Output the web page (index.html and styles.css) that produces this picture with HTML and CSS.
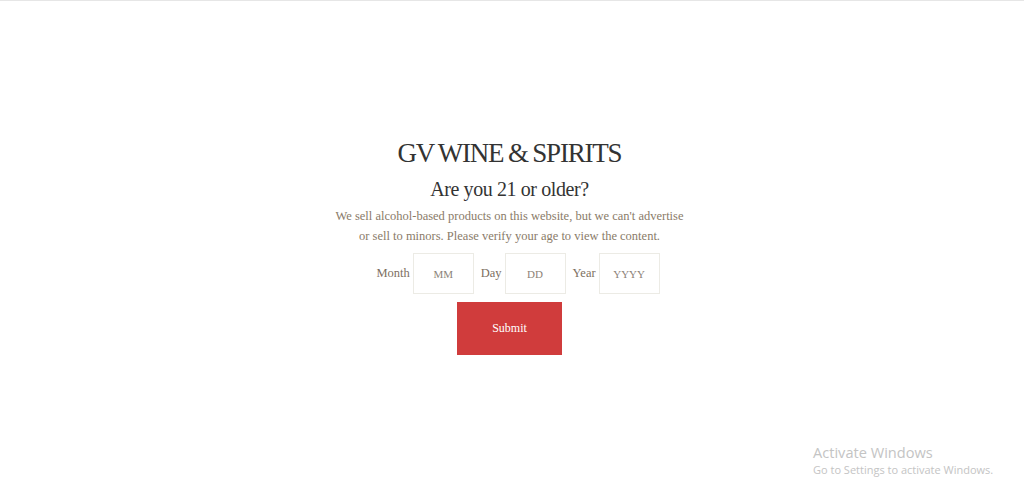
FILE: index.html
```html
<!DOCTYPE html>
<html lang="en">
<head>
    <meta charset="UTF-8">
    <meta name="viewport" content="width=device-width, initial-scale=1.0">
    <title>GV Wine & Spirits</title>
    <link rel="stylesheet" href="styles.css">
</head>
<body>
    <div class="topline"></div>

    <div class="gate">
        <!-- age verification box -->
        <div class="brand">GV WINE &amp; SPIRITS</div>
        <h2 class="question">Are you 21 or older?</h2>
        <p class="note">We sell alcohol-based products on this website, but we can't advertise<br>or sell to minors. Please verify your age to view the content.</p>

        <form class="dob">
            <label for="month">Month</label>
            <input type="text" id="month" placeholder="MM">
            <label for="day">Day</label>
            <input type="text" id="day" placeholder="DD">
            <label for="year">Year</label>
            <input type="text" id="year" placeholder="YYYY">
        </form>

        <button class="submit" type="button">Submit</button>
    </div>

    <div class="activate">
        <div class="activate-title">Activate Windows</div>
        <div class="activate-sub">Go to Settings to activate Windows.</div>
    </div>
</body>
</html>
```

FILE: styles.css
```css
body {
    margin: 0;
    background: #fff;
    font-family: "Liberation Serif", serif;
    height: 502px;
    overflow: hidden;
}

.topline {
    height: 1px;
    background: #e6e6e6;
}

/* centred column, page centre sits a bit left of the window centre */
.gate {
    display: flex;
    flex-direction: column;
    align-items: center;
    padding-top: 135px;
    padding-right: 5px;
}

.brand {
    font-size: 27px;
    letter-spacing: -1.2px;
    word-spacing: -1px;
    color: #333;
    line-height: 34px;
}

.question {
    font-family: "Liberation Serif", serif;
    font-weight: normal;
    font-size: 20px;
    letter-spacing: -0.4px;
    color: #333;
    margin: 6px 0 0;
    line-height: 26px;
}

.note {
    margin: 4px 0 0;
    font-size: 12.5px;
    line-height: 20px;
    color: #8a7b69;
    text-align: center;
}

.dob {
    display: flex;
    align-items: center;
    margin-top: 7px;
    padding-left: 17px;
}

.dob label {
    font-size: 12.5px;
    color: #7d6f5f;
    margin-right: 3px;
}

.dob input {
    width: 61px;
    height: 41px;
    box-sizing: border-box;
    border: 1px solid #ecebe5;
    margin-right: 7px;
    text-align: center;
    font-family: "Liberation Serif", serif;
    font-size: 11px;
    padding: 0;
}

.dob input:last-child {
    margin-right: 0;
}

.dob input::placeholder {
    color: #8c8278;
}

.submit {
    margin-top: 8px;
    width: 105px;
    height: 53px;
    border: none;
    background: #d03c3c;
    color: #fff;
    font-family: "Liberation Serif", serif;
    font-size: 12px;
}

.activate {
    position: absolute;
    left: 813px;
    top: 442px;
    font-family: "Open Sans", sans-serif;
    color: #c4c4c4;
}

.activate-title {
    font-size: 14.6px;
    line-height: 20px;
}

.activate-sub {
    font-size: 11px;
    line-height: 16px;
}
```
